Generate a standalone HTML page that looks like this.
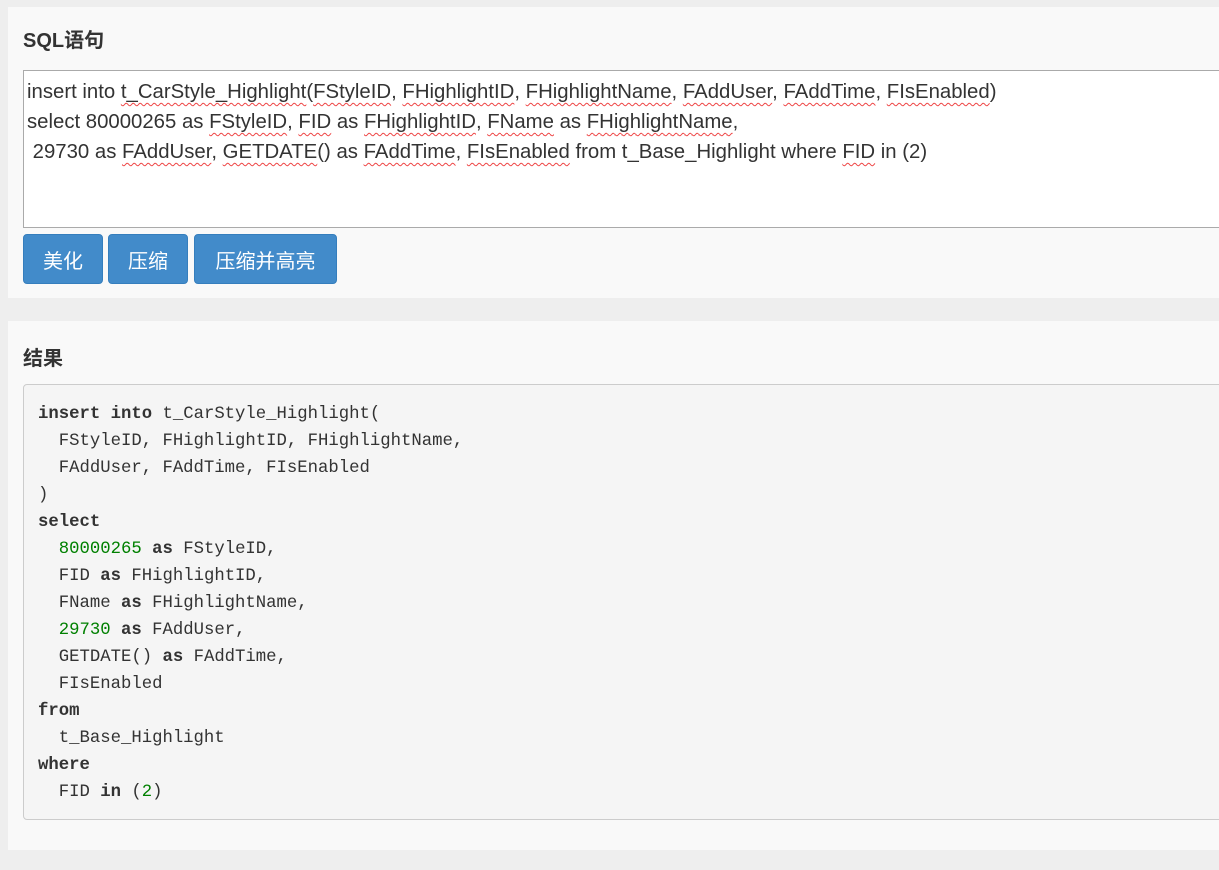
<!DOCTYPE html>
<html><head><meta charset="utf-8"><style>
body{margin:0;background:#eeeeee;width:1219px;height:870px;overflow:hidden;font-family:"Liberation Sans","Noto Sans CJK SC",sans-serif;}
.panel{position:absolute;left:8px;right:0;background:#f9f9f9;}
h3{position:absolute;left:15px;margin:0;font-size:20px;font-weight:bold;color:#333;}
.ta{position:absolute;left:15px;top:63px;width:1300px;height:158px;background:#fff;border:1px solid #aaa;box-sizing:border-box;padding:6px 3px;font-size:20.35px;line-height:30px;color:#333;white-space:pre;}
.u{text-decoration:underline wavy #e44;text-decoration-thickness:1px;text-underline-offset:4px;}
.btn{position:absolute;top:227px;height:50px;background:#428bca;border:1px solid #357ebd;border-radius:4px;color:#fff;font-size:20px;line-height:54px;text-align:center;box-sizing:border-box;}
.pre{position:absolute;left:15px;top:63px;width:1300px;height:436px;margin:0;background:#f5f5f5;border:1px solid #ccc;border-radius:4px;box-sizing:border-box;padding:16px 14px;font-family:"Liberation Mono",monospace;font-size:17.3px;color:#333;}
.pre div{height:27px;line-height:27px;white-space:pre;}
b{font-weight:bold;}
.n{color:#008000;}
</style></head><body>
<div class="panel" style="top:7px;height:291px;">
<h3 style="top:17px;">SQL语句</h3>
<div class="ta">insert into <span class="u">t_CarStyle_Highlight</span>(<span class="u">FStyleID</span>, <span class="u">FHighlightID</span>, <span class="u">FHighlightName</span>, <span class="u">FAddUser</span>, <span class="u">FAddTime</span>, <span class="u">FIsEnabled</span>)
select 80000265 as <span class="u">FStyleID</span>, <span class="u">FID</span> as <span class="u">FHighlightID</span>, <span class="u">FName</span> as <span class="u">FHighlightName</span>,
 29730 as <span class="u">FAddUser</span>, <span class="u">GETDATE</span>() as <span class="u">FAddTime</span>, <span class="u">FIsEnabled</span> from t_Base_Highlight where <span class="u">FID</span> in (2)</div>
<div class="btn" style="left:15px;width:80px;">美化</div>
<div class="btn" style="left:100px;width:80px;">压缩</div>
<div class="btn" style="left:186px;width:143px;">压缩并高亮</div>
</div>
<div class="panel" style="top:321px;height:529px;">
<h3 style="top:21px;">结果</h3>
<div class="pre">
<div><b>insert</b> <b>into</b> t_CarStyle_Highlight(</div>
<div>  FStyleID, FHighlightID, FHighlightName,</div>
<div>  FAddUser, FAddTime, FIsEnabled</div>
<div>)</div>
<div><b>select</b></div>
<div>  <span class="n">80000265</span> <b>as</b> FStyleID,</div>
<div>  FID <b>as</b> FHighlightID,</div>
<div>  FName <b>as</b> FHighlightName,</div>
<div>  <span class="n">29730</span> <b>as</b> FAddUser,</div>
<div>  GETDATE() <b>as</b> FAddTime,</div>
<div>  FIsEnabled</div>
<div><b>from</b></div>
<div>  t_Base_Highlight</div>
<div><b>where</b></div>
<div>  FID <b>in</b> (<span class="n">2</span>)</div>
</div>
</div>
</body></html>
